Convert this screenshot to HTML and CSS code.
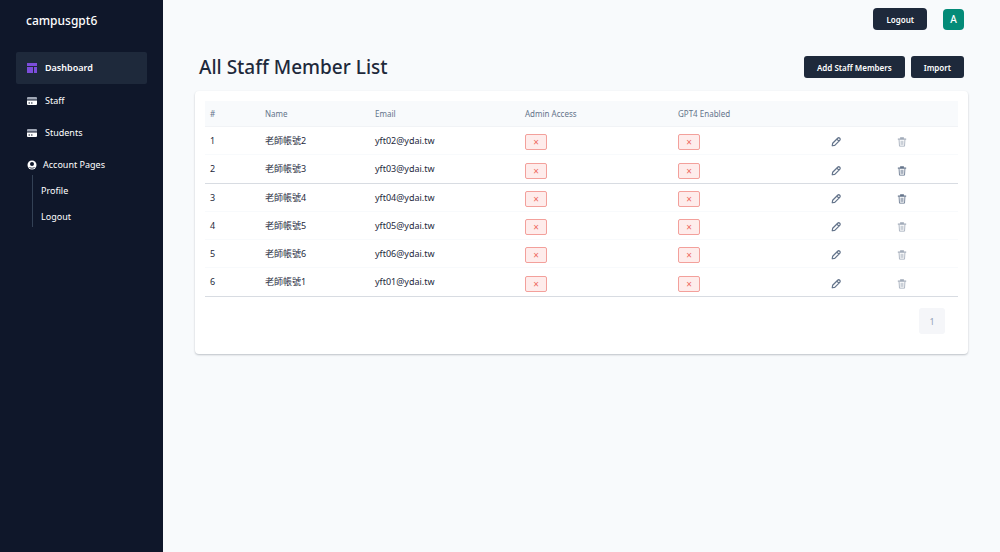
FILE: index.html
```html
<!DOCTYPE html>
<html lang="en">
<head>
    <meta charset="UTF-8">
    <title>All Staff Member List</title>
    <link rel="stylesheet" href="styles.css">
</head>
<body>
    <svg width="0" height="0" class="icon-defs" aria-hidden="true">
        <symbol id="icon-edit" viewBox="0 0 24 24">
            <path d="M3 21l1-6L16 3a3 3 0 0 1 5 5L9 20zM14 5l5 5" fill="none" stroke="currentColor" stroke-width="3" stroke-linejoin="round"/>
        </symbol>
        <symbol id="icon-trash" viewBox="0 0 24 24">
            <path d="M2 5h20M9 4V2h6v2" fill="none" stroke="currentColor" stroke-width="3"/>
            <path d="M5 7l1 15h12l1-15" fill="none" stroke="currentColor" stroke-width="2"/>
            <path d="M10 9v10M14 9v10" stroke="currentColor" stroke-width="2"/>
        </symbol>
        <symbol id="icon-card" viewBox="0 0 20 16">
            <path d="M2 0h16a2 2 0 0 1 2 2v3H0V2a2 2 0 0 1 2-2z" fill="#a0a7b5"/>
            <path d="M0 7h20v7a2 2 0 0 1-2 2H2a2 2 0 0 1-2-2zM3 11v2h3v-2zM8 11v2h3v-2z" fill="#fff" fill-rule="evenodd"/>
        </symbol>
    </svg>

    <div class="layout">
        <aside class="sidebar">
            <div class="brand">campusgpt6</div>
            <nav class="menu">
                <a href="#" class="menu-item active">
                    <svg class="menu-icon" viewBox="0 0 20 20"><path d="M0 0h20v6H0zM0 8h12v12H0zM14 8h6v12h-6z" fill="#7c4ddb"/></svg>
                    Dashboard
                </a>
                <a href="#" class="menu-item">
                    <svg class="menu-icon"><use href="#icon-card"/></svg>
                    Staff
                </a>
                <a href="#" class="menu-item">
                    <svg class="menu-icon"><use href="#icon-card"/></svg>
                    Students
                </a>
                <a href="#" class="menu-item account">
                    <svg class="menu-icon" viewBox="0 0 20 20"><circle cx="10" cy="10" r="9" fill="#fff"/><circle cx="10" cy="8" r="4" fill="#0f172a"/><path d="M4 14c3 2 9 2 12 0-2 4-10 4-12 0z" fill="#0f172a"/></svg>
                    Account Pages
                </a>
                <div class="submenu">
                    <a href="#">Profile</a>
                    <a href="#">Logout</a>
                </div>
            </nav>
        </aside>

        <main class="content">
            <header class="topbar">
                <button type="button" class="btn btn-logout">Logout</button>
                <button type="button" class="avatar">A</button>
            </header>
            <div class="page-head">
                <h1>All Staff Member List</h1>
                <div class="actions">
                    <button type="button" class="btn">Add Staff Members</button>
                    <button type="button" class="btn">Import</button>
                </div>
            </div>
            <section class="card">
                <table>
                    <thead>
                        <tr>
                            <th class="col-id">#</th>
                            <th class="col-name">Name</th>
                            <th class="col-email">Email</th>
                            <th class="col-flag">Admin Access</th>
                            <th class="col-flag">GPT4 Enabled</th>
                            <th class="col-action"></th>
                            <th class="col-action"></th>
                        </tr>
                    </thead>
                    <tbody>
                        <tr>
                            <td>1</td><td>老師帳號2</td><td>yft02@ydai.tw</td>
                            <td><span class="badge">×</span></td><td><span class="badge">×</span></td>
                            <td><button type="button" class="icon-btn" aria-label="Edit"><svg><use href="#icon-edit"/></svg></button></td>
                            <td><button type="button" class="icon-btn faded" aria-label="Delete"><svg><use href="#icon-trash"/></svg></button></td>
                        </tr>
                        <tr class="ruled">
                            <td>2</td><td>老師帳號3</td><td>yft03@ydai.tw</td>
                            <td><span class="badge">×</span></td><td><span class="badge">×</span></td>
                            <td><button type="button" class="icon-btn" aria-label="Edit"><svg><use href="#icon-edit"/></svg></button></td>
                            <td><button type="button" class="icon-btn" aria-label="Delete"><svg><use href="#icon-trash"/></svg></button></td>
                        </tr>
                        <tr>
                            <td>3</td><td>老師帳號4</td><td>yft04@ydai.tw</td>
                            <td><span class="badge">×</span></td><td><span class="badge">×</span></td>
                            <td><button type="button" class="icon-btn" aria-label="Edit"><svg><use href="#icon-edit"/></svg></button></td>
                            <td><button type="button" class="icon-btn" aria-label="Delete"><svg><use href="#icon-trash"/></svg></button></td>
                        </tr>
                        <tr>
                            <td>4</td><td>老師帳號5</td><td>yft05@ydai.tw</td>
                            <td><span class="badge">×</span></td><td><span class="badge">×</span></td>
                            <td><button type="button" class="icon-btn" aria-label="Edit"><svg><use href="#icon-edit"/></svg></button></td>
                            <td><button type="button" class="icon-btn faded" aria-label="Delete"><svg><use href="#icon-trash"/></svg></button></td>
                        </tr>
                        <tr>
                            <td>5</td><td>老師帳號6</td><td>yft06@ydai.tw</td>
                            <td><span class="badge">×</span></td><td><span class="badge">×</span></td>
                            <td><button type="button" class="icon-btn" aria-label="Edit"><svg><use href="#icon-edit"/></svg></button></td>
                            <td><button type="button" class="icon-btn faded" aria-label="Delete"><svg><use href="#icon-trash"/></svg></button></td>
                        </tr>
                        <tr class="ruled">
                            <td>6</td><td>老師帳號1</td><td>yft01@ydai.tw</td>
                            <td><span class="badge">×</span></td><td><span class="badge">×</span></td>
                            <td><button type="button" class="icon-btn" aria-label="Edit"><svg><use href="#icon-edit"/></svg></button></td>
                            <td><button type="button" class="icon-btn faded" aria-label="Delete"><svg><use href="#icon-trash"/></svg></button></td>
                        </tr>
                    </tbody>
                </table>
                <div class="pagination">
                    <button type="button" class="page">1</button>
                </div>
            </section>
        </main>
    </div>
</body>
</html>
```
FILE: styles.css
```css
* {
    box-sizing: border-box;
}
body {
    margin: 0;
    font-family: "Noto Sans", "Noto Sans CJK TC", sans-serif;
    font-size: 9px;
    line-height: 12px;
    color: #1e293b;
    background-color: #f8fafc;
}
button {
    font-family: inherit;
    border: none;
    padding: 0;
    cursor: pointer;
}
a {
    color: #fff;
    text-decoration: none;
}
.icon-defs {
    display: none;
}
.layout {
    display: flex;
    min-height: 100vh;
}

/* Sidebar */
.sidebar {
    width: 163px;
    flex-shrink: 0;
    padding: 12px 16px;
    background-color: #0f172a;
}
.brand {
    padding-left: 10px;
    font-size: 12px;
    font-weight: 500;
    line-height: 18px;
    color: #fff;
}
.menu {
    display: flex;
    flex-direction: column;
    margin-top: 22px;
}
.menu-item {
    display: flex;
    align-items: center;
    gap: 8px;
    height: 32px;
    padding: 0 11px;
}
.menu-item.active {
    margin-bottom: 1px;
    font-weight: 600;
    background-color: #1e293b;
    border-radius: 2px;
}
.menu-item.account {
    gap: 6px;
}
.menu-icon {
    width: 10px;
    height: 10px;
}
.submenu {
    display: flex;
    flex-direction: column;
    gap: 14px;
    margin-left: 16px;
    margin-top: -6px;
    padding: 10px 0 4px 8px;
    border-left: 1px solid #334155;
}

/* Content */
.content {
    flex: 1;
    padding: 8px 32px;
}
.topbar {
    display: flex;
    justify-content: flex-end;
    align-items: center;
    gap: 16px;
    padding-right: 4px;
}
.btn {
    height: 22px;
    padding: 0 13px;
    font-size: 8px;
    font-weight: 600;
    color: #fff;
    background-color: #1e293b;
    border-radius: 3px;
}
.btn-logout {
    border-radius: 4px;
}
.avatar {
    width: 21px;
    height: 21px;
    font-size: 10px;
    font-weight: 500;
    color: #fff;
    background-color: #048b78;
    border-radius: 4px;
}
.page-head {
    display: flex;
    justify-content: space-between;
    align-items: center;
    margin: 23px 0 10px;
    padding: 0 4px;
}
h1 {
    margin: 0;
    font-size: 19px;
    font-weight: 500;
    line-height: 28px;
}
.actions {
    display: flex;
    gap: 6px;
}
.card {
    padding: 10px 10px 20px;
    background-color: #fff;
    border-radius: 4px;
    box-shadow: 0 1px 2px rgba(15, 23, 42, 0.25);
}
table {
    width: 100%;
    table-layout: fixed;
    border-collapse: separate;
    border-spacing: 0;
}
th,
td {
    height: 28px;
    padding: 0 5px;
    text-align: left;
    border-bottom: 1px solid #f8fafc;
}
th {
    height: 26px;
    font-size: 8px;
    font-weight: 400;
    color: #64748b;
    background-color: #f8fafc;
    border-bottom-color: #f1f3f6;
}
td:nth-child(n + 4) {
    padding-top: 3px;
}
.ruled td {
    height: 29px;
    border-bottom-color: #d8dce2;
}
.col-id {
    width: 55px;
}
.col-name {
    width: 110px;
}
.col-email {
    width: 150px;
}
.col-flag {
    width: 153px;
}
.col-action {
    width: 66px;
}
.badge {
    display: block;
    width: 22px;
    height: 16px;
    font-size: 10px;
    line-height: 14px;
    text-align: center;
    color: #ef6a62;
    background-color: #feeceb;
    border: 1px solid #f3a09b;
    border-radius: 2px;
}
.icon-btn {
    display: block;
    width: 10px;
    height: 10px;
    color: #64748b;
    background: none;
}
.icon-btn svg {
    display: block;
    width: 10px;
    height: 10px;
}
.icon-btn.faded {
    opacity: 0.6;
}
.pagination {
    display: flex;
    justify-content: flex-end;
    padding: 11px 13px 0;
}
.page {
    width: 26px;
    height: 26px;
    font-size: 9px;
    color: #94a3b8;
    background-color: #f5f6f9;
    border-radius: 3px;
}
```
